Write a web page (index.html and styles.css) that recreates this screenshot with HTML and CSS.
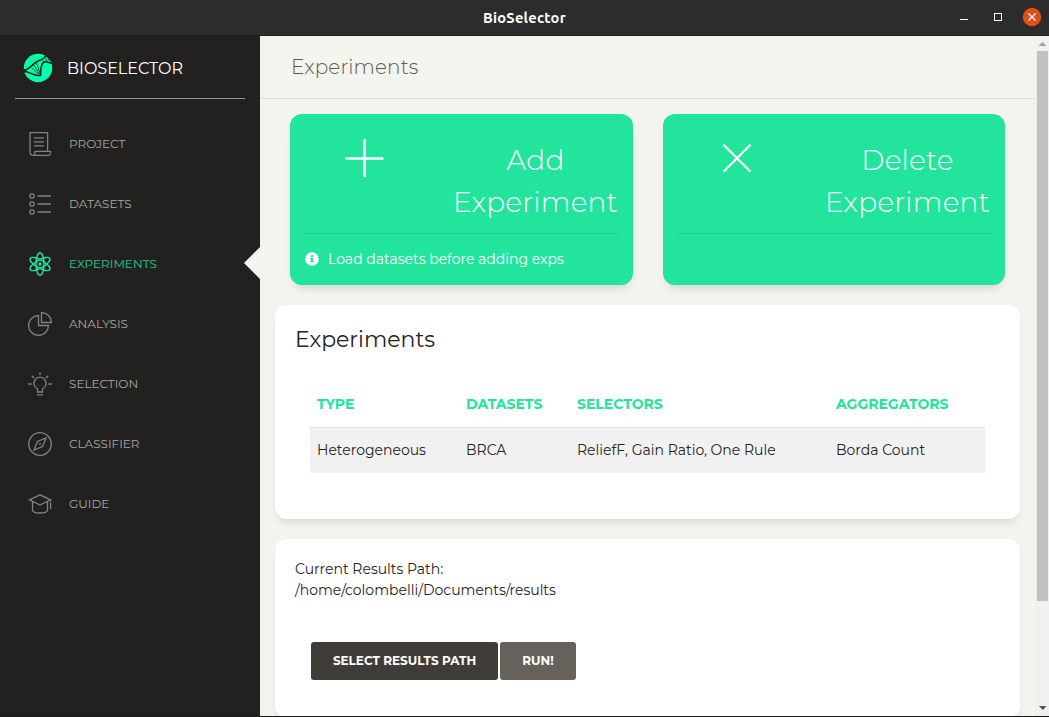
FILE: index.html
```html
<!DOCTYPE html>
<html lang="en">
<head>
<meta charset="utf-8">
<title>BioSelector</title>
<link rel="stylesheet" href="styles.css">
</head>
<body>
<div class="window">
  <header class="titlebar">
    <span class="titlebar-spacer"></span>
    <span class="titlebar-title">BioSelector</span>
    <span class="titlebar-controls">
      <svg class="control" viewBox="0 0 18 18"><path d="M5 11.500h8" stroke="#fff" stroke-width="1"/></svg>
      <svg class="control" viewBox="0 0 18 18"><rect x="5.500" y="5.500" width="7" height="7" fill="none" stroke="#fff"/></svg>
      <svg class="control" viewBox="0 0 18 18"><circle cx="9" cy="9" r="9.200" fill="#e04e1b"/><path d="M5.500 5.500l7 7M12.500 5.500l-7 7" stroke="#fff" stroke-width="1.300"/></svg>
    </span>
  </header>
  <div class="app">
    <aside class="sidebar">
      <div class="brand">
        <svg class="brand-logo" viewBox="0 0 30 30">
          <circle cx="15" cy="15" r="14.200" fill="#0fa"/>
          <path d="M22 1l8 0v10l-3.500-1C24 8 22 5 22 1z" fill="#222120"/>
          <path d="M23 3.800l1.500.8 4.500 5-1.500.8-4-1.500-1.800-2z" fill="#0fa"/>
          <path d="M0 17.500C6 17.500 9 11 14 8.500C18 6.700 21 6.500 23 2M0 18.500C7 18 11 24 17.500 22.300C18 16 17.500 11 21 9C24 8 27 10.500 30 10" fill="none" stroke="#222120" stroke-width="1.500"/>
          <path d="M8.500 14.500L15.500 21.500M11 12L16.500 21.500M13.500 9.500L17.500 21.500M20 7l1.500 3M22.500 5l2 4M24.500 4l3 5.500" stroke="#222120" stroke-width=".8"/>
          <path d="M0 16h3.300v2.200l-1 3L0 22z" fill="#222120"/>
          <path d="M1.300 19.500l2.200.3-.7 2.300z" fill="#0fa"/>
        </svg>
        <span class="brand-name">BIOSELECTOR</span>
      </div>
      <nav class="nav">
        <a class="nav-item"><svg class="nav-icon" viewBox="0 0 24 24"><path d="M5 23.400a3 3 0 0 1-3-3V.6h17.600v18.600M6 5.800h10M6 9.800h10M6 13.800h10M5 23.400c1.500 0 2-1 2-4h15.500v1.500c0 1.500-1 2.500-2.500 2.500z"/></svg><span class="nav-label">PROJECT</span></a>
        <a class="nav-item"><svg class="nav-icon" viewBox="0 0 24 24"><circle cx="4" cy="4" r="2.200"/><circle cx="4" cy="12" r="2.200"/><circle cx="4" cy="20" r="2.200"/><path d="M9.500 4H23M9.500 12H23M9.500 20H23"/></svg><span class="nav-label">DATASETS</span></a>
        <a class="nav-item active"><svg class="nav-icon" viewBox="0 0 24 24"><ellipse cx="12" cy="12" rx="4" ry="11.300"/><ellipse cx="12" cy="12" rx="4" ry="11.300" transform="rotate(60 12 12)"/><ellipse cx="12" cy="12" rx="4" ry="11.300" transform="rotate(120 12 12)"/><circle cx="12" cy="12" r="1" fill="currentColor"/></svg><span class="nav-label">EXPERIMENTS</span></a>
        <a class="nav-item"><svg class="nav-icon" viewBox="0 0 24 24"><path d="M10.500 3.500a9.950 9.950 0 1 0 10 10h-10z"/><path d="M13.500.6a10 10 0 0 1 9.900 9.900h-9.900z"/></svg><span class="nav-label">ANALYSIS</span></a>
        <a class="nav-item"><svg class="nav-icon" viewBox="0 0 24 24"><path d="M9.500 20v-3.200a6.100 6.100 0 1 1 5 0V20zM9 22.900h6M12 .2v3M.2 12h3.500M20.300 12h3.500M3.700 3.700l2.300 2.300M20.300 3.700L18 6"/></svg><span class="nav-label">SELECTION</span></a>
        <a class="nav-item"><svg class="nav-icon" viewBox="0 0 24 24"><circle cx="12" cy="12" r="11.300"/><path d="M18 6l-3.500 8.500L6 18l3.500-8.500z"/><circle cx="12" cy="12" r=".4"/></svg><span class="nav-label">CLASSIFIER</span></a>
        <a class="nav-item"><svg class="nav-icon" viewBox="0 0 24 24"><path d="M12 2.800L1.500 7.800 12 13l10.500-5.200zM4.500 9.500V18c0 2 3 3 7.500 3s7.500-1 7.500-3V9.500M22.600 8v1.500M22.600 10.500v6.500"/></svg><span class="nav-label">GUIDE</span></a>
      </nav>
    </aside>
    <main class="main">
      <div class="page-head"><span class="page-title">Experiments</span></div>
      <div class="content">
        <div class="actions">
          <section class="action-card">
            <div class="action-top">
              <svg class="action-icon" viewBox="0 0 42 42"><path d="M21.500 2v38M2.500 21.500h38" stroke="#fff" stroke-width="2.500"/></svg>
              <div class="action-title"><span>Add</span><span>Experiment</span></div>
            </div>
            <div class="action-note">
              <svg class="info-icon" viewBox="0 0 14 14"><circle cx="7" cy="7" r="6.800" fill="#fff"/><path d="M6 3h2v2H6zM5.300 6H8v3h.7v1.300H5.300V9H6V7.200h-.7z" fill="#22e49d"/></svg>
              <span>Load datasets before adding exps</span>
            </div>
          </section>
          <section class="action-card">
            <div class="action-top">
              <svg class="action-icon" viewBox="0 0 42 42"><path d="M7.500 7.700l27 27M34.500 7.700l-27 27" stroke="#fff" stroke-width="2.300"/></svg>
              <div class="action-title"><span>Delete</span><span>Experiment</span></div>
            </div>
            <div class="action-note"></div>
          </section>
        </div>
        <section class="card table-card">
          <h4 class="card-title">Experiments</h4>
          <table class="table">
            <thead><tr><th class="col-type">TYPE</th><th class="col-data">DATASETS</th><th class="col-sel">SELECTORS</th><th>AGGREGATORS</th></tr></thead>
            <tbody><tr><td>Heterogeneous</td><td>BRCA</td><td>ReliefF, Gain Ratio, One Rule</td><td>Borda Count</td></tr></tbody>
          </table>
        </section>
        <section class="card path-card">
          <div class="path-line">Current Results Path:</div>
          <div class="path-line">/home/colombelli/Documents/results</div>
          <div class="buttons">
            <button class="btn btn-select">SELECT RESULTS PATH</button>
            <button class="btn btn-run">RUN!</button>
          </div>
        </section>
      </div>
    </main>
    <div class="scrollbar">
      <svg class="scroll-arrow" viewBox="0 0 14 15"><path d="M7.500 6l4 4h-8z" fill="#a3a3a3"/></svg>
      <div class="scroll-thumb"></div>
      <span class="scroll-rest"></span>
      <svg class="scroll-arrow" viewBox="0 0 14 15"><path d="M4 5h7.500L7.750 9z" fill="#505050"/></svg>
    </div>
  </div>
</div>
</body>
</html>
```
FILE: styles.css
```css
* { box-sizing: border-box; }
body {
  margin: 0;
  font-family: Montserrat, Inter, "Open Sans", sans-serif;
  font-size: 14px;
  font-weight: 400;
  color: #252422;
  background: #1c1b1c;
  overflow: hidden;
}
.window { width: 1049px; height: 717px; display: flex; flex-direction: column; border-bottom: 1px solid #1d1a1c; }
.titlebar {
  height: 36px;
  flex: none;
  display: grid;
  grid-template-columns: 1fr auto 1fr;
  align-items: center;
  background: #2c2c2c;
  border-bottom: 1px solid #1f1f1f;
  padding: 0 8px;
}
.titlebar-title { font: 700 14.67px Ubuntu, "Noto Sans", sans-serif; color: #fff; letter-spacing: .22px; }
.titlebar-controls { display: flex; justify-content: flex-end; gap: 16px; padding-bottom: 1px; }
.control { width: 18px; height: 18px; overflow: visible; }
.app { flex: 1; min-height: 0; display: flex; }

.sidebar { width: 260px; background: #222120; flex: none; }
.brand {
  height: 63px;
  margin: 0 15px;
  padding-left: 8px;
  display: flex;
  align-items: center;
  gap: 14px;
  border-bottom: 1px solid #91908f;
}
.brand-logo { width: 30px; height: 30px; margin-top: 2px; }
.brand-name { font-size: 16px; color: #fff; padding-top: 2px; }
.nav { padding-top: 15px; }
.nav-item { height: 60px; display: flex; align-items: center; gap: 17px; padding-left: 28px; color: #a7a6a6; position: relative; }
.nav-icon { width: 24px; height: 24px; fill: none; stroke: currentColor; stroke-width: 1.3; opacity: .72; }
.nav-label { font-size: 12px; padding-bottom: 2px; }
.active { color: #22e49d; }
.active .nav-icon { opacity: 1; stroke-width: 1.4; }
.active .nav-label { opacity: .86; }
.active::after {
  content: "";
  position: absolute;
  right: 0;
  top: 13px;
  border: 16px solid transparent;
  border-right-color: #f4f3ef;
  border-left-width: 0;
}

.main { flex: 1; min-width: 0; background: #f3f4ee; overflow: hidden; }
.page-head { height: 63px; border-bottom: 1px solid #dddddb; padding-left: 31px; display: flex; align-items: center; }
.page-title { font-size: 20px; font-weight: 300; letter-spacing: .13px; color: #5d5852; }
.content { padding: 15px; display: flex; flex-direction: column; gap: 20px; }
.actions { display: grid; grid-template-columns: 343px 342px; gap: 30px; padding: 0 15px; }
.action-card { height: 171px; border-radius: 12px; background: #22e49d; color: #fff; padding: 0 15px; box-shadow: 0 6px 10px -4px rgba(0, 0, 0, .15); }
.action-top { height: 120px; border-bottom: 1px solid #1cca8b; display: flex; justify-content: space-between; padding: 25px 0 0 38px; }
.action-icon { width: 42px; height: 42px; margin-top: -2px; fill: none; }
.action-title { display: flex; flex-direction: column; align-items: center; font-size: 28px; line-height: 42px; font-weight: 300; letter-spacing: .18px; width: 165px; white-space: nowrap; }
.action-note { height: 50px; display: flex; align-items: center; gap: 9px; }
.info-icon { width: 14px; height: 14px; }

.card { background: #fff; border-radius: 12px; box-shadow: 0 6px 10px -4px rgba(0, 0, 0, .15); padding: 20px; }
.table-card { height: 214px; }
.card-title { margin: 0 0 27px; font-size: 22px; line-height: 30px; font-weight: 400; }
.table { border-collapse: collapse; width: 675px; margin-left: 15px; table-layout: fixed; }
.table th { text-align: left; height: 45px; padding: 0 7px; color: #22e49d; font-weight: 700; border-bottom: 1px solid #dee2e6; white-space: nowrap; }
.table td { height: 46px; padding: 0 7px 1px; background: #f1f1f1; white-space: nowrap; }
.col-type { width: 149px; }
.col-data { width: 111px; }
.col-sel { width: 259px; }
.path-card { height: 179px; }
.path-line { height: 21px; line-height: 21px; }
.buttons { display: flex; gap: 2px; margin: 41px 0 0 16px; }
.btn { height: 38px; border: 0; border-radius: 3px; padding: 0 0 1px; color: #fff; font: inherit; font-size: 12px; font-weight: 700; white-space: nowrap; }
.btn-select { width: 187px; background: #403d39; }
.btn-run { width: 76px; background: #66615b; }

.scrollbar { width: 14px; background: #f0f0f0; display: flex; flex-direction: column; }
.scroll-arrow { width: 14px; height: 15px; }
.scroll-thumb { height: 550px; margin: 0 1px 0 2px; background: #c1c1c1; }
.scroll-rest { flex: 1; }
```
